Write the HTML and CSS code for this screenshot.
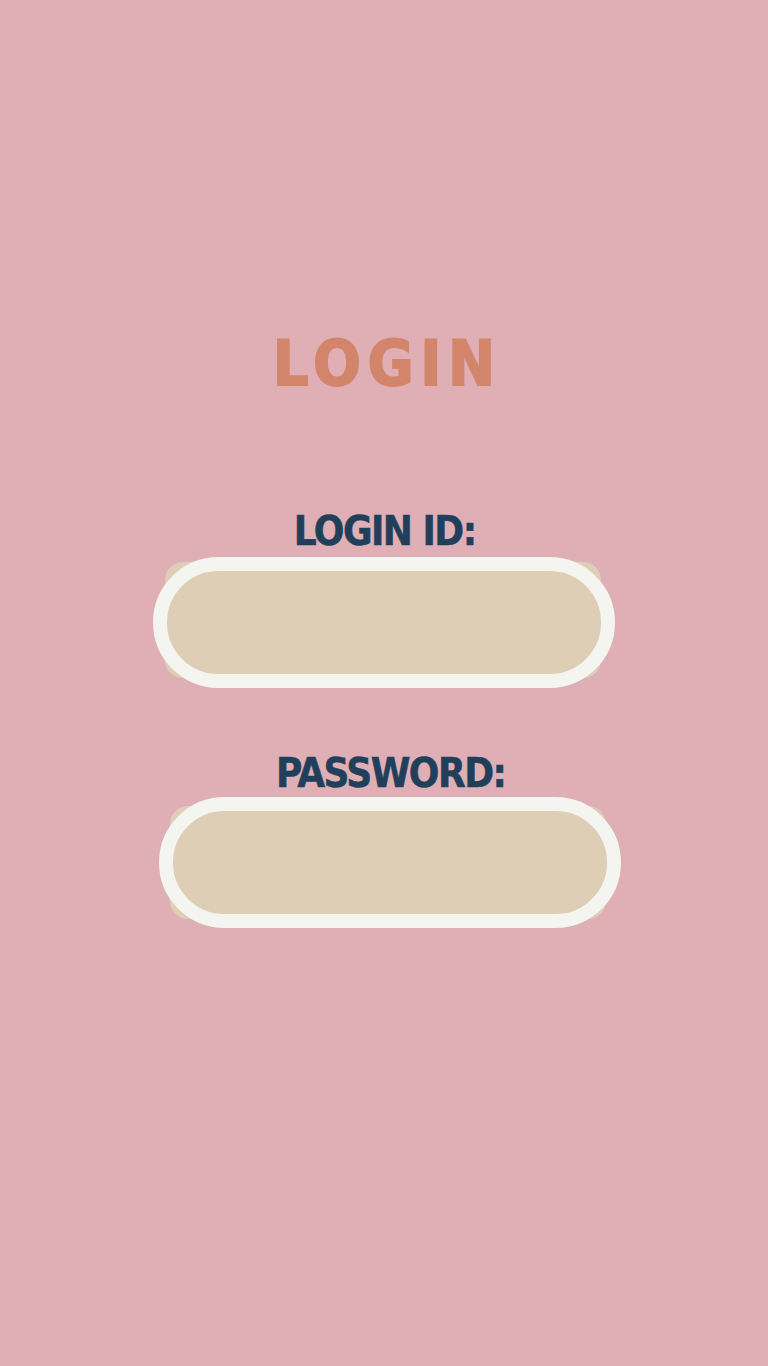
FILE: index.html
```html
<!DOCTYPE html>
<html lang="en">
<head>
<meta charset="utf-8">
<title>Login</title>
<link rel="stylesheet" href="styles.css">
</head>
<body>
<main class="page">
  <h1 class="title">LOGIN</h1>
  <form class="form">
    <div class="group">
      <label class="label" for="login-id">LOGIN ID:</label>
      <div class="field">
        <span class="field-back"></span>
        <input class="field-input" id="login-id" type="text">
      </div>
    </div>
    <div class="group group-password">
      <label class="label" for="password">PASSWORD:</label>
      <div class="field">
        <span class="field-back field-back-alt"></span>
        <input class="field-input" id="password" type="password">
      </div>
    </div>
  </form>
</main>
</body>
</html>
```
FILE: styles.css
```css
html, body {
  margin: 0;
  padding: 0;
}
body {
  background: #dfafb5;
  min-height: 1366px;
  font-family: "DejaVu Sans Condensed", "DejaVu Sans", sans-serif;
}
.page {
  display: flex;
  flex-direction: column;
  align-items: center;
  padding-top: 332px;
}
.title {
  margin: 0;
  font-size: 62px;
  line-height: 63px;
  font-weight: 700;
  letter-spacing: 7px;
  padding-left: 7px;
  color: #d2856a;
  -webkit-text-stroke: 2px #d2856a;
}
.form {
  display: flex;
  flex-direction: column;
  align-items: center;
  margin-top: 115px;
}
.group {
  display: flex;
  flex-direction: column;
  align-items: center;
}
.group-password {
  margin-top: 64px;
  margin-left: 12px;
}
.label {
  display: block;
  font-size: 40px;
  line-height: 42px;
  font-weight: 700;
  letter-spacing: -1.5px;
  padding-left: 1.5px;
  color: #213f5a;
  margin-bottom: 5px;
  -webkit-text-stroke: 0.5px #213f5a;
}
.group-password .label {
  margin-bottom: 3px;
}
.field {
  position: relative;
  width: 462px;
  height: 131px;
}
.field-back {
  position: absolute;
  left: 12px;
  top: 5px;
  width: 436px;
  height: 116px;
  border-radius: 18px;
  background: #ddceb5;
}
.field-back-alt {
  left: 11px;
  top: 9px;
  height: 113px;
}
.field-input {
  position: relative;
  display: block;
  box-sizing: border-box;
  width: 462px;
  height: 131px;
  margin: 0;
  padding: 0 40px;
  border: 14px solid #f4f4f0;
  border-radius: 66px;
  background: #ddceb5;
  outline: none;
  font: inherit;
  font-size: 28px;
  color: #213f5a;
  appearance: none;
}
```
